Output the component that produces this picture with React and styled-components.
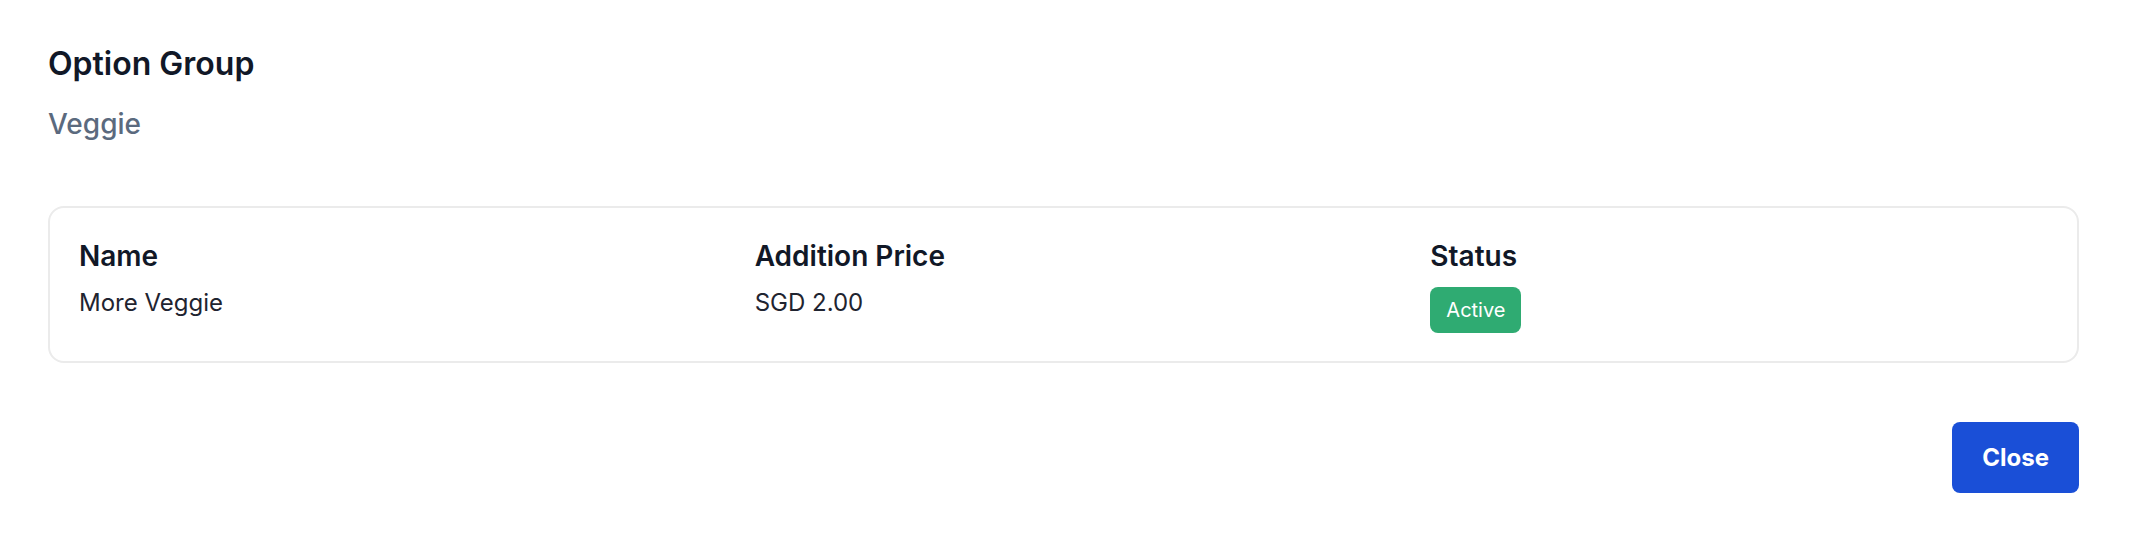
import React from 'react';
import styled, { createGlobalStyle } from 'styled-components';

const GlobalStyle = createGlobalStyle`
  html, body {
    margin: 0;
    padding: 0;
    background: #ffffff;
    font-family: Inter, "Noto Sans", sans-serif;
    color: #111827;
  }
`;

const Page = styled.div`
  width: 2132px;
  height: 552px;
  box-sizing: border-box;
  padding: 44px 53px 0 48px;
  display: flex;
  flex-direction: column;
`;

const Title = styled.h2`
  margin: 0;
  font-size: 32px;
  line-height: 40px;
  font-weight: 600;
  color: #111827;
`;

const Subtitle = styled.div`
  margin-top: 22px;
  font-size: 28px;
  line-height: 36px;
  font-weight: 500;
  color: #5b6a7e;
`;

const Card = styled.div`
  margin-top: 64px;
  border: 2px solid #ebebeb;
  border-radius: 16px;
  padding: 30px 29px 28px;
  display: grid;
  grid-template-columns: repeat(3, 1fr);
  column-gap: 58px;
`;

const Column = styled.div`
  display: flex;
  flex-direction: column;
  align-items: flex-start;
`;

const Label = styled.div`
  font-size: 28px;
  line-height: 36px;
  font-weight: 600;
  color: #111827;
`;

const Value = styled.div`
  margin-top: 13px;
  font-size: 24px;
  line-height: 32px;
  color: #1f2430;
`;

const Badge = styled.span`
  margin-top: 13px;
  display: inline-flex;
  align-items: center;
  justify-content: center;
  box-sizing: border-box;
  height: 46px;
  padding: 0 16px;
  border-radius: 8px;
  background: ${props => props.color};
  color: #ffffff;
  font-size: 20px;
  font-weight: 400;
`;

const Footer = styled.div`
  margin-top: 59px;
  display: flex;
  justify-content: flex-end;
`;

const Button = styled.button`
  height: 71px;
  padding: 0 30px;
  border: 0;
  border-radius: 8px;
  background: #1a4fd7;
  color: #ffffff;
  font-family: inherit;
  font-size: 24px;
  font-weight: 700;
  cursor: pointer;
`;

const options = [
  { name: 'More Veggie', price: 'SGD 2.00', status: 'Active' },
];

export default function App() {
  return (
    <>
      <GlobalStyle />
      <Page>
        <Title>Option Group</Title>
        <Subtitle>Veggie</Subtitle>
        {options.map(option => (
          <Card key={option.name}>
            <Column>
              <Label>Name</Label>
              <Value>{option.name}</Value>
            </Column>
            <Column>
              <Label>Addition Price</Label>
              <Value>{option.price}</Value>
            </Column>
            <Column>
              <Label>Status</Label>
              <Badge color="#2fab72">{option.status}</Badge>
            </Column>
          </Card>
        ))}
        <Footer>
          <Button>Close</Button>
        </Footer>
      </Page>
    </>
  );
}
